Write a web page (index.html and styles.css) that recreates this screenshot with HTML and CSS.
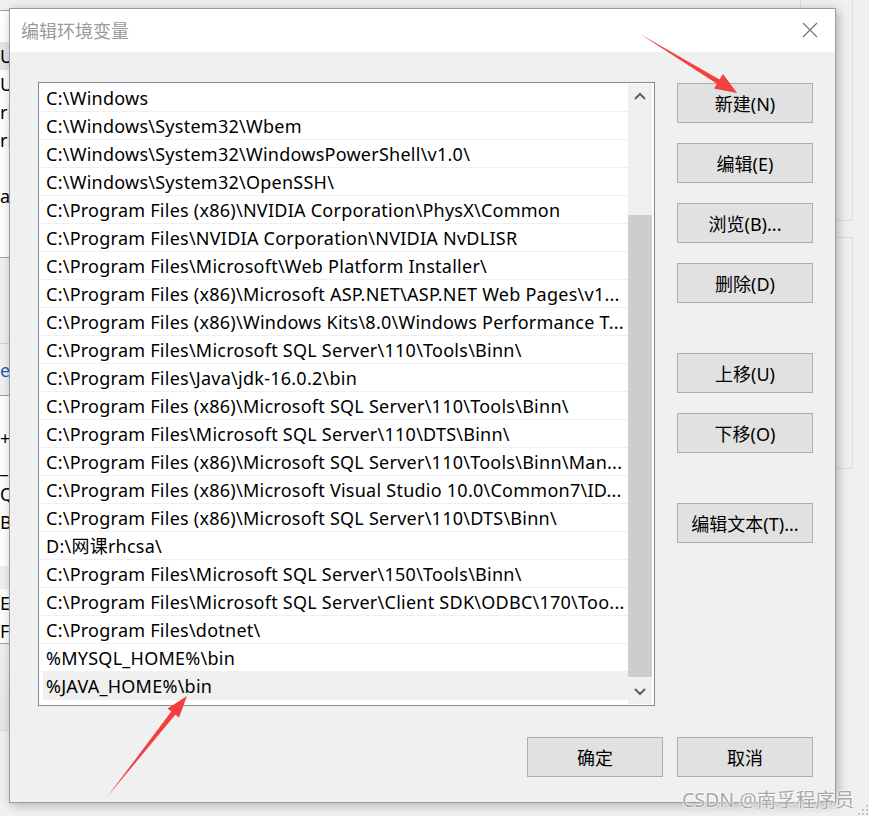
FILE: index.html
```html
<!DOCTYPE html>
<html lang="zh-CN">
<head>
  <meta charset="UTF-8"/>
  <meta name="viewport" content="width=device-width, initial-scale=1.0"/>
  <title>编辑环境变量</title>
  <link rel="stylesheet" href="styles.css">
</head>
<body>
<div class="desk">

  <!-- window behind, left edge -->
  <div class="bgwin">
    <div class="bg-top"></div>
    <div class="bg-list">
      <div class="bg-row sel">U</div>
      <div class="bg-row">U</div>
      <div class="bg-row">ri</div>
      <div class="bg-row">ri</div>
      <div class="bg-row"></div>
      <div class="bg-row">ar</div>
    </div>
    <div class="bg-gap"></div>
    <div class="bg-btn">e(</div>
    <div class="bg-list2">
      <div class="bg-row2">+D</div>
      <div class="bg-row2">_H</div>
      <div class="bg-row2">QL</div>
      <div class="bg-row2">BI</div>
    </div>
    <div class="bg-gap2"></div>
    <div class="bg-list3">
      <div class="bg-row2">E</div>
      <div class="bg-row2">F</div>
    </div>
    <div class="bg-fade"></div>
  </div>

  <!-- window behind, right edge -->
  <div class="bggroup g1"></div>
  <div class="bggroup g2"></div>

  <div class="dialog">
    <div class="titlebar">
      <span class="title">编辑环境变量</span>
      <svg class="close" width="16" height="16" viewBox="0 0 16 16">
        <path d="M1 1 L15 15 M15 1 L1 15" stroke="#707070" stroke-width="1.1" fill="none"/>
      </svg>
    </div>

    <div class="content">
      <div class="main">
        <div class="listbox">
          <div class="rows">
            <div class="row">C:\Windows</div>
            <div class="row">C:\Windows\System32\Wbem</div>
            <div class="row">C:\Windows\System32\WindowsPowerShell\v1.0\</div>
            <div class="row">C:\Windows\System32\OpenSSH\</div>
            <div class="row">C:\Program Files (x86)\NVIDIA Corporation\PhysX\Common</div>
            <div class="row">C:\Program Files\NVIDIA Corporation\NVIDIA NvDLISR</div>
            <div class="row">C:\Program Files\Microsoft\Web Platform Installer\</div>
            <div class="row">C:\Program Files (x86)\Microsoft ASP.NET\ASP.NET Web Pages\v1...</div>
            <div class="row">C:\Program Files (x86)\Windows Kits\8.0\Windows Performance T...</div>
            <div class="row">C:\Program Files\Microsoft SQL Server\110\Tools\Binn\</div>
            <div class="row">C:\Program Files\Java\jdk-16.0.2\bin</div>
            <div class="row">C:\Program Files (x86)\Microsoft SQL Server\110\Tools\Binn\</div>
            <div class="row">C:\Program Files\Microsoft SQL Server\110\DTS\Binn\</div>
            <div class="row">C:\Program Files (x86)\Microsoft SQL Server\110\Tools\Binn\Man...</div>
            <div class="row">C:\Program Files (x86)\Microsoft Visual Studio 10.0\Common7\ID...</div>
            <div class="row">C:\Program Files (x86)\Microsoft SQL Server\110\DTS\Binn\</div>
            <div class="row">D:\网课rhcsa\</div>
            <div class="row">C:\Program Files\Microsoft SQL Server\150\Tools\Binn\</div>
            <div class="row">C:\Program Files\Microsoft SQL Server\Client SDK\ODBC\170\Too...</div>
            <div class="row">C:\Program Files\dotnet\</div>
            <div class="row">%MYSQL_HOME%\bin</div>
            <div class="row sel">%JAVA_HOME%\bin</div>
          </div>
          <div class="scrollbar">
            <div class="sb-btn">
              <svg width="12" height="8" viewBox="0 0 12 8"><path d="M1 7 L6 2 L11 7" stroke="#606060" stroke-width="2" fill="none"/></svg>
            </div>
            <div class="sb-track"><div class="sb-thumb"></div></div>
            <div class="sb-btn">
              <svg width="12" height="8" viewBox="0 0 12 8"><path d="M1 1 L6 6 L11 1" stroke="#606060" stroke-width="2" fill="none"/></svg>
            </div>
          </div>
        </div>

        <div class="side">
          <button class="btn">新建(N)</button>
          <button class="btn">编辑(E)</button>
          <button class="btn">浏览(B)...</button>
          <button class="btn">删除(D)</button>
          <button class="btn sep">上移(U)</button>
          <button class="btn">下移(O)</button>
          <button class="btn sep">编辑文本(T)...</button>
        </div>
      </div>

      <div class="footer">
        <button class="btn">确定</button>
        <button class="btn">取消</button>
      </div>
    </div>
  </div>

  <!-- annotation arrows -->
  <svg class="arrows" width="869" height="816" viewBox="0 0 869 816">
    <polygon points="640,34 719.5,79.5 723,74 737,93 714,88.5 716.9,83.7" fill="#f33f3f"/>
    <polygon points="107,797 171.3,711.6 167.5,708.5 187,696 179,717.5 175.3,714.8" fill="#f33f3f"/>
  </svg>

  <div class="watermark">CSDN @南孚程序员</div>

  <svg class="grip" width="12" height="12" viewBox="0 0 12 12">
    <rect x="9" y="1" width="2" height="2" fill="#c8c8c8"/>
    <rect x="5" y="5" width="2" height="2" fill="#c8c8c8"/>
    <rect x="9" y="5" width="2" height="2" fill="#c8c8c8"/>
    <rect x="1" y="9" width="2" height="2" fill="#c8c8c8"/>
    <rect x="5" y="9" width="2" height="2" fill="#c8c8c8"/>
    <rect x="9" y="9" width="2" height="2" fill="#c8c8c8"/>
  </svg>
</div>
</body>
</html>
```

FILE: styles.css
```css
* {
  margin: 0; padding: 0;
  box-sizing: border-box;
}

body {
  background: #f0f0f0;
  font-family: "Noto Sans", "Noto Sans CJK SC", sans-serif;
  font-size: 18px;
  color: #000;
  overflow: hidden;
}

.desk {
  position: relative;
  width: 869px;
  height: 816px;
  overflow: hidden;
}

/* window behind the dialog */
.bgwin {
  position: absolute;
  top: 0;
  left: 0;
  width: 40px;
  height: 816px;
  background: #f0f0f0;
  display: flex;
  flex-direction: column;
}

.bg-top {
  height: 11px;
  border-bottom: 1px solid #a0a0a0;
}

.bg-list {
  height: 247px;
  background: #fff;
  border-bottom: 1px solid #a0a0a0;
  padding-top: 31px;
}

.bg-row {
  height: 28px;
  line-height: 28px;
}

.bg-row.sel {
  background: #e5e5e5;
}

.bg-gap {
  height: 86px;
  border-bottom: 1px solid #d0d0d0;
}

.bg-btn {
  height: 52px;
  line-height: 52px;
  color: #1a5fb4;
  border-bottom: 1px solid #a0a0a0;
}

.bg-list2 {
  height: 170px;
  background: #fff;
  padding-top: 28px;
}

.bg-row2 {
  height: 28px;
  line-height: 28px;
}

.bg-gap2 {
  height: 23px;
}

.bg-list3 {
  height: 55px;
  background: #fff;
  border-bottom: 1px solid #a0a0a0;
}

.bg-fade {
  height: 87px;
  background: linear-gradient(to bottom, #f0f0f0, #e6e6e6);
  border-bottom: 1px solid #d8d8d8;
}

.bggroup {
  position: absolute;
  left: 800px;
  width: 53px;
  border: 1px solid #dcdcdc;
}

.g1 { top: -1px; height: 222px; }
.g2 { top: 237px; height: 232px; }

/* dialog */
.dialog {
  position: absolute;
  top: 8px;
  left: 9px;
  width: 827px;
  height: 795px;
  background: #f0f0f0;
  border: 1px solid #9c9c9c;
  box-shadow: 2px 2px 10px rgba(0,0,0,0.28);
  display: flex;
  flex-direction: column;
}

.titlebar {
  height: 43px;
  background: #fff;
  display: flex;
  align-items: center;
  justify-content: space-between;
  padding: 0 17px 0 11px;
}

.title {
  color: #9a9a9a;
  font-size: 18px;
  margin-top: -2px;
}

.close {
  margin-top: -2px;
}

.content {
  flex: 1;
  padding: 30px 22px 0 28px;
  display: flex;
  flex-direction: column;
}

.main {
  display: flex;
  gap: 22px;
}

.listbox {
  flex-shrink: 0;
  width: 617px;
  height: 624px;
  background: #fff;
  border: 1px solid #828790;
  padding: 1px 2px 1px 1px;
  display: flex;
}

.rows {
  flex: 1;
  min-width: 0;
}

.row {
  height: 28px;
  line-height: 26px;
  padding: 1px 0 0 6px;
  border-bottom: 1px solid #f0f0f0;
  letter-spacing: 0.25px;
  white-space: nowrap;
  overflow: hidden;
}

.row.sel {
  background: #f0f0f0;
  margin-left: 3px;
  padding-left: 3px;
}

.scrollbar {
  width: 24px;
  background: #f0f0f0;
  display: flex;
  flex-direction: column;
}

.sb-btn {
  height: 24px;
  display: flex;
  align-items: center;
  justify-content: center;
}

.sb-track {
  flex: 1;
  padding-top: 107px;
}

.sb-thumb {
  height: 462px;
  background: #cdcdcd;
}

.side {
  flex-shrink: 0;
  display: flex;
  flex-direction: column;
  gap: 20px;
  padding-top: 1px;
}

.btn {
  width: 136px;
  height: 40px;
  background: #e1e1e1;
  border: 1px solid #adadad;
  font-family: "Noto Sans", "Noto Sans CJK SC", sans-serif;
  font-size: 18px;
  color: #000;
}

.btn.sep {
  margin-top: 30px;
}

.footer {
  display: flex;
  justify-content: flex-end;
  gap: 14px;
  margin-top: 31px;
}

/* overlays */
.arrows {
  position: absolute;
  top: 0;
  left: 0;
  pointer-events: none;
}

.watermark {
  position: absolute;
  left: 682px;
  top: 784px;
  font-size: 19.5px;
  color: #a9a9a9;
  text-shadow: 0 0 2px #fff, 0 0 2px #fff, 0 0 1px #fff;
  white-space: nowrap;
}

.grip {
  position: absolute;
  right: 0;
  bottom: 0;
}
```
